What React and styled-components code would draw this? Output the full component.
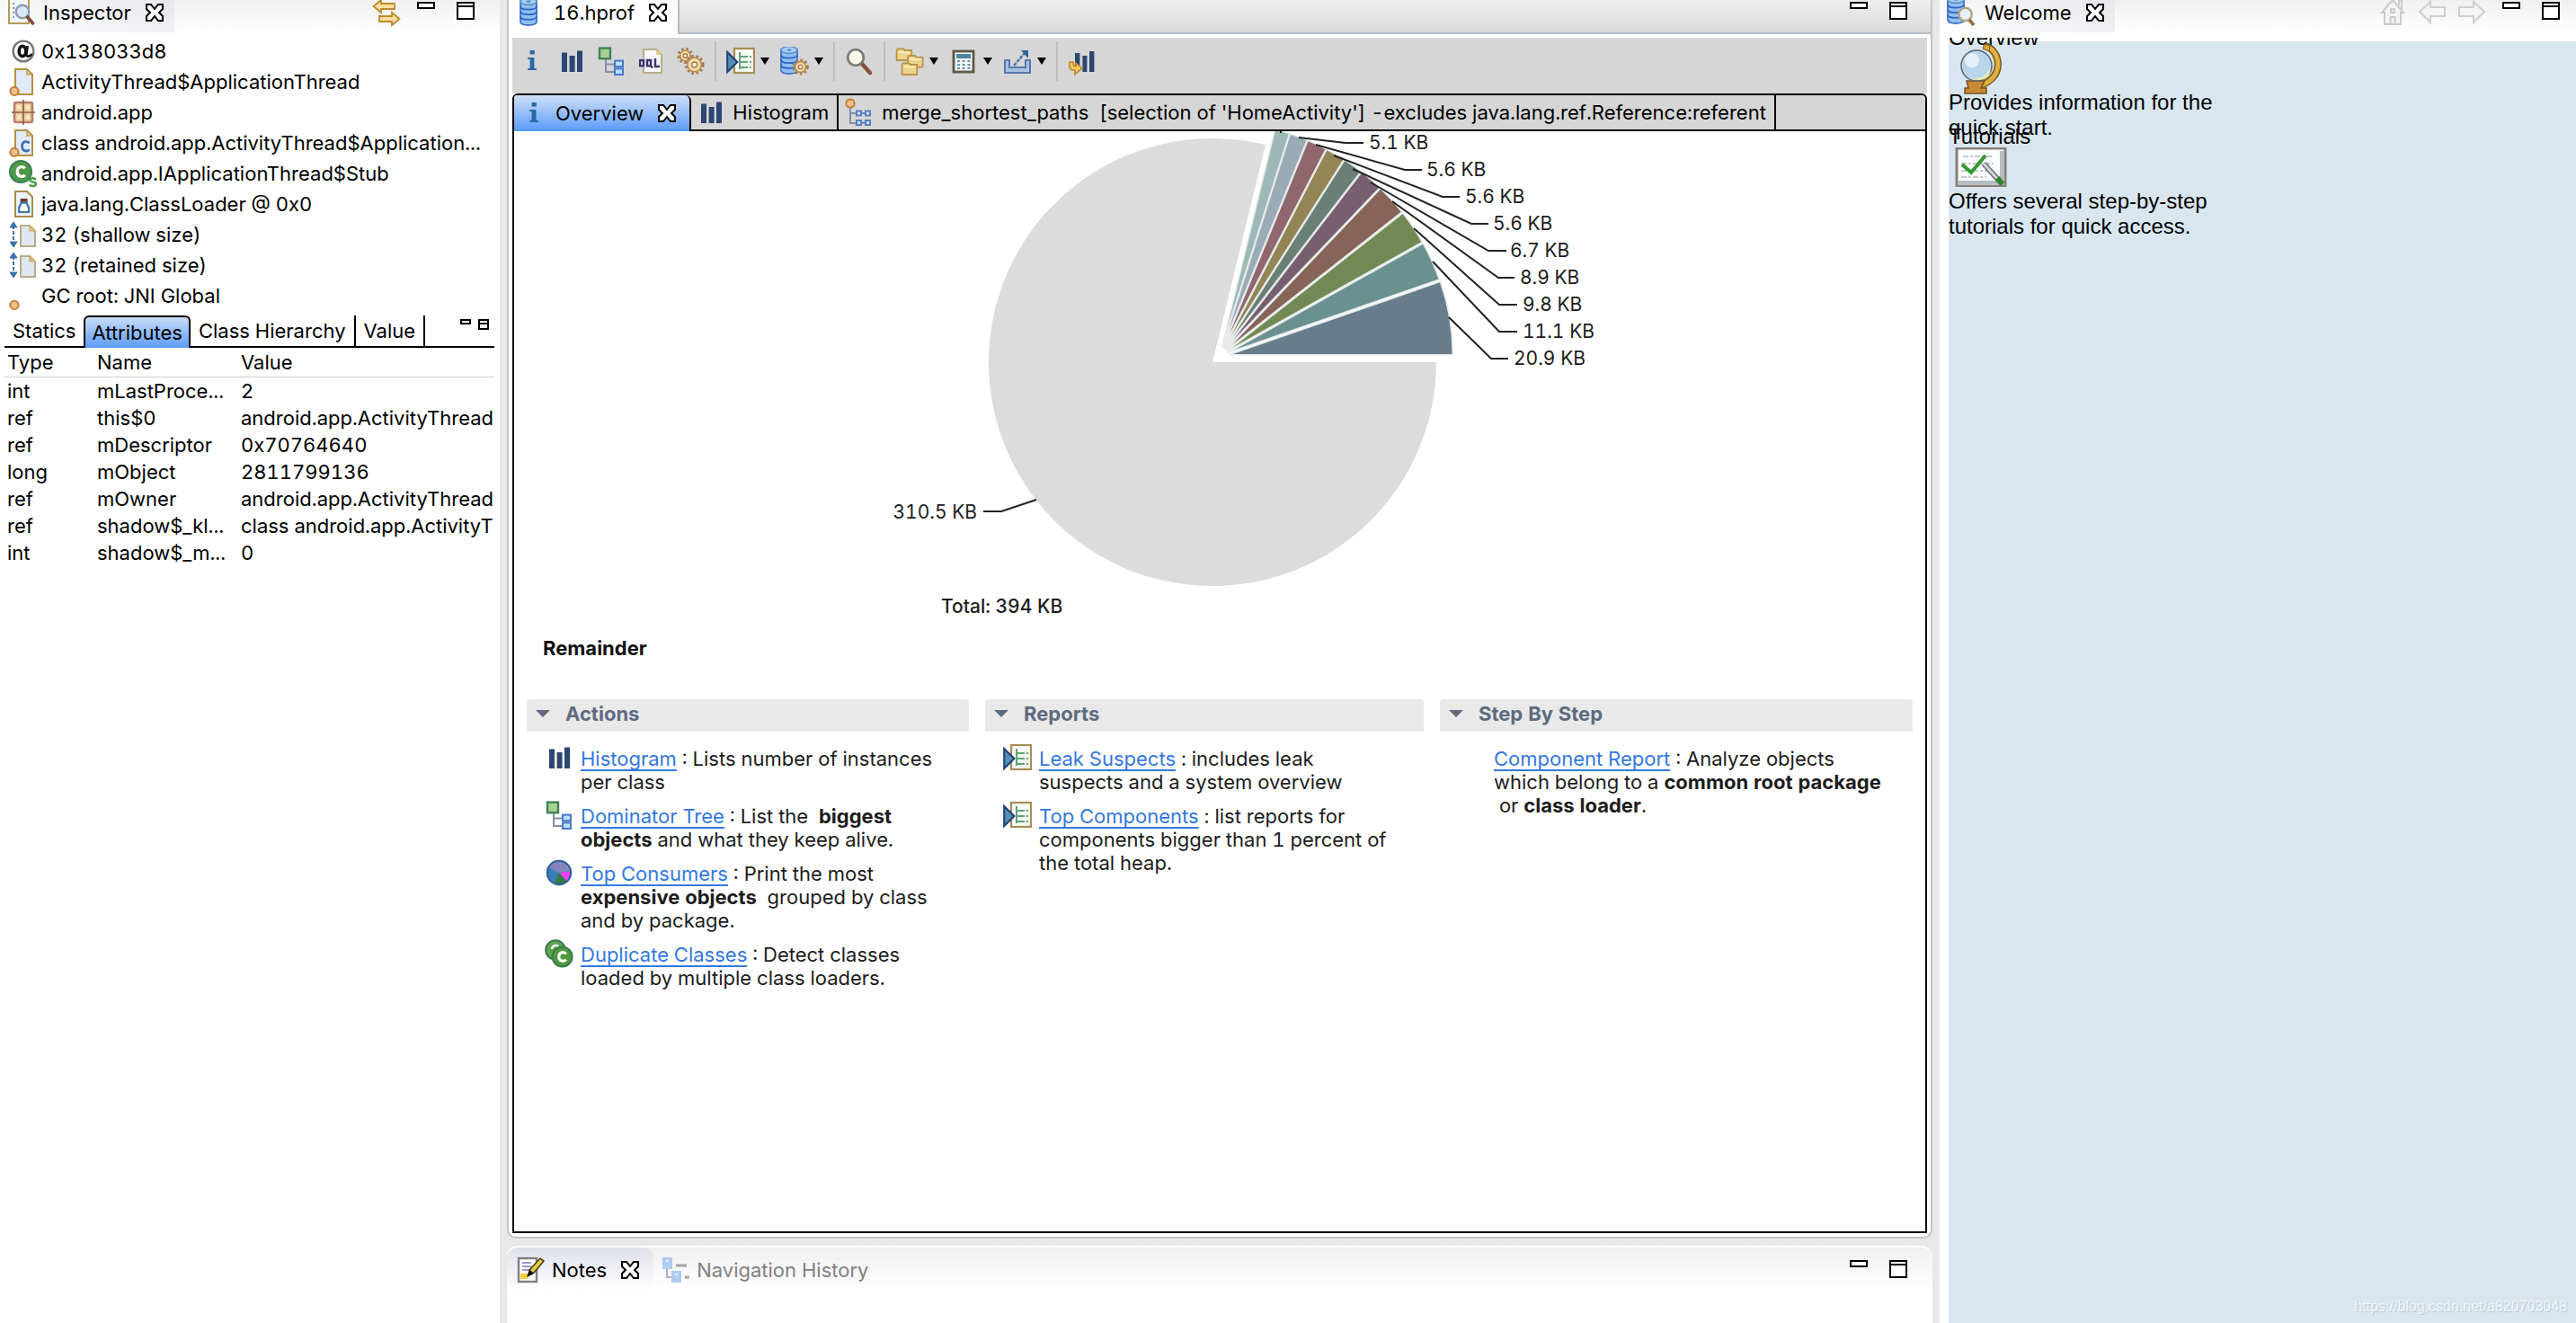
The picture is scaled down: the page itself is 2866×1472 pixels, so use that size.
import React from 'react';
import styled, { createGlobalStyle, css } from 'styled-components';

const GlobalStyle = createGlobalStyle`
  *, *::before, *::after { box-sizing: border-box; }
  html, body, #root { height: 100%; }
  body {
    margin: 0;
    overflow: hidden;
    background: #e8e8e8;
    color: #000;
    font-family: Inter, "Liberation Sans", sans-serif;
    font-size: 22px;
    font-variant-numeric: tabular-nums;
    line-height: 30px;
  }
  button { font: inherit; color: inherit; background: none; border: 0; padding: 0; margin: 0; cursor: pointer; }
  ul { list-style: none; margin: 0; padding: 0; }
  h2, h3, p { margin: 0; font-size: inherit; }
  svg { display: block; flex: none; }
`;

/* ---------- icons ---------- */

const Icon = ({ size = 32, box = 16, children }) => (
  <svg width={size} height={size} viewBox={`0 0 ${box} ${box}`} aria-hidden="true">{children}</svg>
);

const CloseGlyph = () => (
  <svg width="20" height="20" viewBox="0 0 20 20" aria-hidden="true">
    <path d="M1 1h5l4 5 4-5h5v5l-4 4 4 4v5h-5l-4-5-4 5H1v-5l4-4-4-4z" fill="#fff" stroke="#000" strokeWidth="2" />
  </svg>
);
const MinGlyph = () => (
  <svg width="20" height="20" viewBox="0 0 20 20" aria-hidden="true">
    <path d="M1 1h18v6H1z" fill="#fff" stroke="#000" strokeWidth="2" />
  </svg>
);
const MaxGlyph = () => (
  <svg width="20" height="20" viewBox="0 0 20 20" aria-hidden="true">
    <path d="M1 1h18v18H1zM1 5h18" fill="#fff" stroke="#000" strokeWidth="2" />
  </svg>
);
const SmallMin = () => (
  <svg width="12" height="12" viewBox="0 0 12 12" aria-hidden="true">
    <path d="M1 1h10v4H1z" fill="#fff" stroke="#000" strokeWidth="2" />
  </svg>
);
const SmallRestore = () => (
  <svg width="12" height="12" viewBox="0 0 12 12" aria-hidden="true">
    <path d="M1 1h10v10H1zM1 5h10" fill="#fff" stroke="#000" strokeWidth="2" />
  </svg>
);
const Arrow = () => (
  <svg width="10" height="8" viewBox="0 0 10 8" aria-hidden="true"><path d="M0 0h10L5 8z" /></svg>
);
const Twistie = () => (
  <svg width="16" height="8" viewBox="0 0 16 8" aria-hidden="true"><path d="M0 0h16L8 8z" fill="#5d6b80" /></svg>
);

const Page = ({ x = 3.5, tint = '#e3eaf7' }) => (
  <>
    <path d={`M${x} 1h6.500l3 3v11h-9.500z`} fill={tint} stroke="#b39144" strokeWidth="1" />
    <path d={`M${x + 6.5} 1v3h3z`} fill="#e5c987" stroke="#b39144" strokeWidth=".6" />
  </>
);
const RootDot = () => <circle cx="3" cy="13.200" r="2.300" fill="#f4bf85" stroke="#c47c39" strokeWidth="1" />;

const InspectorIcon = () => (
  <Icon>
    <path d="M1 .500h11v13.500H1z" fill="#f2f6fc" stroke="#b99a55" />
    <path d="M3 3h1M3 5.500h1M3 8h1M3 10.500h1" stroke="#7c93bf" />
    <circle cx="8.500" cy="7.500" r="3.600" fill="#dbe8f8" stroke="#8d9cb3" strokeWidth="1.200" />
    <path d="M11.300 10.500l3 3.500" stroke="#7d4b3a" strokeWidth="1.800" strokeLinecap="round" />
  </Icon>
);
const SyncIcon = () => (
  <Icon>
    <path d="M.800 4.500L5 1v2h7.500v3H5v2z" fill="#f7dfa0" stroke="#bd8a2c" strokeWidth=".900" />
    <path d="M15.200 11.500L11 8v2H4v3h7v2z" fill="#f7dfa0" stroke="#bd8a2c" strokeWidth=".900" />
  </Icon>
);
const AtIcon = () => (
  <Icon>
    <circle cx="8" cy="8" r="5.700" fill="#fff" stroke="#777" strokeWidth="1.200" />
    <ellipse cx="7.500" cy="8" rx="1.900" ry="2.800" fill="none" stroke="#111" strokeWidth="1.800" />
    <path d="M10.300 5l-.700 5c.3 1.300 2 1 3.200-.500" fill="none" stroke="#111" strokeWidth="1.400" />
  </Icon>
);
const ObjectIcon = () => <Icon><Page /><RootDot /></Icon>;
const PackageIcon = () => (
  <Icon>
    <rect x="3" y="2.500" width="10" height="11" rx="1" fill="#ecd0a0" stroke="#b5806a" strokeWidth="1.300" />
    <path d="M8 1v14M1.500 8h13" stroke="#8d5a48" strokeWidth=".8" />
    <path d="M4.500 5.300h2M9.500 5.300h2M4.500 10.800h2M9.500 10.800h2" stroke="#fbe8c4" strokeWidth="2" />
  </Icon>
);
const ClassIcon = () => (
  <Icon>
    <Page />
    <path d="M11.200 8.200c-.500-1.300-3.900-1.500-3.900 1.700s3.400 3 3.900 1.700" fill="none" stroke="#3f72b3" strokeWidth="1.400" />
    <RootDot />
  </Icon>
);
const SuperIcon = () => (
  <Icon>
    <circle cx="6.500" cy="7" r="6" fill="#4f9a48" stroke="#3a7f58" />
    <path d="M8.800 5.200c-.900-1.500-4.200-1.300-4.200 1.800s3.300 3.300 4.200 1.800" fill="none" stroke="#fff" strokeWidth="1.600" />
    <path d="M15 11.300c-1.500-1-3.500-.700-3.300.5s3.300.600 3.300 2-2.200 1.500-3.700.600" fill="none" stroke="#4b9b46" strokeWidth="1.300" />
  </Icon>
);
const LoaderIcon = () => (
  <Icon>
    <path d="M3.500 1h6.500l3 3v11h-9.500z" fill="#eef2fa" stroke="#a98c4c" />
    <path d="M6.300 5h4v2h-4z" fill="#7b3a23" />
    <path d="M6.800 7.300h3c0 1.200 1.200 1.500 1.200 3v2.200H5.600v-2.200c0-1.500 1.200-1.800 1.200-3z" fill="#fff" stroke="#3b74b5" strokeWidth="1.100" />
  </Icon>
);
const SizeIcon = () => (
  <Icon>
    <path d="M2.500 3v10" stroke="#3c71a9" strokeDasharray="2 1" />
    <path d="M.500 4L2.500 1l2 3zM.500 12l2 3 2-3z" fill="#3c71a9" stroke="#3c71a9" strokeWidth=".5" />
    <path d="M6.500 3h5l3 3v8.500h-8z" fill="#dfe7f3" stroke="#b9ad86" />
    <path d="M11.500 3v3h3z" fill="#e0c987" stroke="#c4ac62" strokeWidth=".6" />
  </Icon>
);
const GcIcon = () => <Icon><RootDot /></Icon>;

const DbStack = () => (
  <>
    <path d="M1.500 1.500v11.500c0 1.300 2 2 4.500 2s4.500-.700 4.500-2V1.500z" fill="#8fc0ee" stroke="#4274cc" strokeWidth=".900" />
    <path d="M1.500 4.500c0 2.400 9 2.400 9 0M1.500 7.300c0 2.400 9 2.400 9 0M1.500 10.100c0 2.400 9 2.400 9 0" fill="none" stroke="#2f62c8" strokeWidth=".9" />
    <ellipse cx="6" cy="1.800" rx="4.500" ry="1.900" fill="#a8d0f2" stroke="#5d93cf" strokeWidth=".8" />
    <ellipse cx="6" cy="1.800" rx="1.300" ry=".6" fill="#4c86c9" />
  </>
);
const DbIcon = () => <Icon><g transform="translate(1 0)"><DbStack /></g></Icon>;
const WelcomeIcon = () => (
  <Icon>
    <g transform="translate(-1 -1)"><DbStack /></g>
    <circle cx="10.300" cy="9" r="3.600" fill="#e8f1fb" stroke="#b3a27e" strokeWidth="1.200" />
    <path d="M12.500 12l2.500 3" stroke="#93703c" strokeWidth="1.800" />
  </Icon>
);
const InfoIcon = () => (
  <Icon>
    <path d="M6.800 2h2.600v2.200H6.800zM5.600 6h3.600v6h1.200v1H5.600v-1h1.200V7H5.600z" fill="#2768a8" />
  </Icon>
);
const BarsIcon = () => (
  <Icon>
    <path d="M2.500 3.300h3V14h-3zM6.800 5h3v9h-3zM11 2.300h3V14h-3z" fill="#2c4673" />
  </Icon>
);
const TreeIcon = () => (
  <Icon>
    <path d="M5 6v8h5M5 9.800h5" fill="none" stroke="#8390a5" />
    <rect x="1.500" y=".800" width="6" height="5.800" fill="#a8d092" stroke="#3f8358" strokeWidth="1.200" />
    <rect x="10" y="7.800" width="4.500" height="3.300" fill="#b8e2fb" stroke="#4778c8" />
    <rect x="10" y="12.200" width="4.500" height="3.300" fill="#b8e2fb" stroke="#4778c8" />
  </Icon>
);
const OqlIcon = () => (
  <Icon>
    <path d="M4 1.500h7l3 3V14.500H4z" fill="#f8f8fb" stroke="#b8ae85" />
    <path d="M11 1.500v3h3z" fill="#e5cc86" />
    <rect x="1" y="6.500" width="12.500" height="5" fill="#f2f2f8" />
    <path d="M2 7.500h2v3.200H2zM6 7.500h2v3.200H6zM8 10.500l1 1.200M10.500 6.500v4.500h2.500" fill="none" stroke="#3b3568" strokeWidth="1.200" />
  </Icon>
);
const Gear = ({ x, y, r, w = 1.4 }) => (
  <g transform={`translate(${x} ${y})`}>
    <circle r={r + 0.9} fill="none" stroke="#a37b55" strokeWidth={w} strokeDasharray="1.300 1.300" />
    <circle r={r} fill="#f5dca4" stroke="#b58a55" strokeWidth=".8" />
    <circle r={r / 2.6} fill="#fdf6e4" stroke="#a5794f" strokeWidth=".7" />
  </g>
);
const GearsIcon = () => <Icon><Gear x={5.200} y={5} r={2.900} /><Gear x={10.300} y={10} r={3.900} /></Icon>;
const ReportIcon = () => (
  <Icon>
    <rect x="4.500" y="1" width="11" height="13.500" fill="#f6f9f4" stroke="#a88d55" strokeWidth="1.100" />
    <path d="M7.500 3v9.500M7.500 5.500h4.500M7.500 8.500h4.500M7.500 11.500h4.500M13 5.500h1M13 8.500h1M13 11.500h1" stroke="#5fa573" />
    <path d="M.600 3v11l5.600-5.500z" fill="#5291b0" stroke="#1f3d7a" />
  </Icon>
);
const DbGearIcon = () => <Icon><g transform="translate(-1 0)"><DbStack /></g><Gear x={11.300} y={11.200} r={3} /></Icon>;
const SearchIcon = () => (
  <Icon>
    <path d="M9.500 9.500l4.500 5" stroke="#83503c" strokeWidth="2.200" strokeLinecap="round" />
    <circle cx="6" cy="6" r="4.400" fill="#f9f9ee" stroke="#7c7c74" strokeWidth="1.400" />
  </Icon>
);
const FoldersIcon = () => (
  <Icon>
    {[[.8, 1], [7, 4.8], [3.8, 9]].map(([x, y]) => (
      <g key={x} transform={`translate(${x} ${y})`}>
        <path d="M0 1V6.500H8.300V1H4.500L4 .200H.500z" fill="#efd48c" stroke="#b9944a" strokeWidth=".9" />
        <path d="M1 2.200h6.300" stroke="#fbeec4" />
      </g>
    ))}
  </Icon>
);
const CalcIcon = () => (
  <Icon>
    <rect x="2.500" y="2.500" width="11" height="11.500" fill="#f3f7f7" stroke="#5e5744" strokeWidth="1.400" />
    <path d="M4 4h8v2.500H4z" fill="#4d84a3" />
    <path d="M4.500 8h1.500M7.300 8h1.500M10.200 8h1.500M4.500 10h1.500M7.300 10h1.500M10.200 10h1.500M4.500 12h1.500M7.300 12h1.500M10.200 12h1.500" stroke="#5d93b3" />
  </Icon>
);
const ExportIcon = () => (
  <Icon>
    <path d="M1 7.500h2.500v4h9v-4H15v7H1z" fill="#a9c2e4" stroke="#5676ad" />
    <path d="M6 10.500L12.500 3" stroke="#4472a8" strokeWidth="1.200" strokeDasharray="2 .6" />
    <path d="M10 2h4v4.500z" fill="#2c6396" />
  </Icon>
);
const BarsArrowIcon = () => (
  <Icon>
    <path d="M4 3.500h2.700V12H4zM8.200 5h2.500v9H8.200zM12 2.500h2.700V14H12z" fill="#2c4673" />
    <path d="M1 8.500v2.500c0 2 1.500 2 3 2v2.300L8 12 4.500 9v1.800C3.500 11 3 10.500 3 8.500z" fill="#f6cb5c" stroke="#b9832a" strokeWidth=".8" />
  </Icon>
);
const MergeIcon = () => (
  <Icon>
    <path d="M3.500 5v9h5M3.500 8.500h5" fill="none" stroke="#8390a5" />
    <circle cx="3.500" cy="3" r="2.300" fill="#f4bf85" stroke="#c47c39" />
    <path d="M7 7.300h2.500v2.500H7zM12 7.300h2.500v2.500H12zM7 12.500h2.500V15H7zM12 12.500h2.500V15H12zM9.500 8.500H12M9.500 13.700H12" fill="#cfe0f6" stroke="#5b7fc0" />
  </Icon>
);
const PieIcon = () => (
  <Icon>
    <circle cx="8" cy="8" r="6.600" fill="#3a7fb5" />
    <path d="M8 8L2 5a6.600 6.600 0 0 1 12.500 2z" fill="#8585bd" />
    <path d="M8 8l6.600-.800A6.600 6.600 0 0 1 12.500 13z" fill="#ec3df0" />
    <path d="M8 8l4.500 5a6.600 6.600 0 0 1-7 1z" fill="#357a40" />
    <circle cx="8" cy="8" r="6.600" fill="none" stroke="#2a5aa0" />
  </Icon>
);
const DupIcon = () => (
  <Icon>
    <circle cx="6" cy="6" r="5.400" fill="#5fa551" stroke="#3a7a4c" />
    <path d="M7.500 4c-1-1-3.300-.600-3.500 1.500" fill="none" stroke="#fff" strokeWidth="1.200" />
    <circle cx="9.800" cy="9.700" r="5.500" fill="#4f9a3e" stroke="#3a7a4c" />
    <path d="M11.800 8.200c-.800-1.400-3.900-1.200-3.900 1.500s3.100 2.900 3.900 1.500" fill="none" stroke="#fff" strokeWidth="1.500" />
  </Icon>
);
const NotesIcon = () => (
  <Icon>
    <rect x="1.500" y="1.500" width="10" height="13" fill="#fff" stroke="#7e7e84" strokeWidth="1.200" />
    <path d="M3.500 4h5M3.500 6h5M3.500 8h4" stroke="#9a9ac4" />
    <path d="M2.500 10h4v3h-4z" fill="#f4cf3c" />
    <path d="M7 11l1-3.500L13.500 1.500 15.500 3 10 9.500z" fill="#e8cf3c" stroke="#454022" strokeWidth=".8" />
    <path d="M6 12l1.500-4.500L10 10z" fill="#111" />
  </Icon>
);
const NavHistIcon = () => (
  <Icon>
    <path d="M3.500 7v5h3" fill="none" stroke="#a9b0bd" />
    <rect x="1" y="1" width="5.500" height="6.500" fill="#aecbf0" />
    <rect x="6" y="8.500" width="5.500" height="6.500" fill="#aecbf0" />
    <path d="M3 3h1.500M8 10.500h1.500" stroke="#e4effb" />
    <path d="M8.500 5.500h6M13.500 12H16" stroke="#a3a3aa" strokeWidth="1.500" />
  </Icon>
);
const HomeIcon = () => (
  <Icon>
    <path d="M2 8l6-7 6 7h-1.500v6.500h-9V8z" fill="#f3f3f3" stroke="#cbcbcb" />
    <path d="M6.800 14.500v-4h2.500v4M7 6h2v2H7zM11.500 4V1H13v5" fill="none" stroke="#cbcbcb" />
  </Icon>
);
const BackIcon = () => (
  <Icon><path d="M1 7.500L7 2v3h8v5H7v3.500z" fill="#f5f5f5" stroke="#cfcfcf" /></Icon>
);
const ForwardIcon = () => (
  <Icon><path d="M15 7.500L9 2v3H1v5h8v3.500z" fill="#f5f5f5" stroke="#cfcfcf" /></Icon>
);
const GlobeArt = () => (
  <svg width="72" height="58" viewBox="0 0 72 58" aria-hidden="true">
    <path d="M41 3c18 6 21 36-6 44" fill="none" stroke="#75591d" strokeWidth="8" />
    <path d="M41 3c18 6 21 36-6 44" fill="none" stroke="#dfb23e" strokeWidth="5" />
    <path d="M38 6l2-5 6 2-1 6z" fill="#d9a838" stroke="#75591d" />
    <path d="M20 42h20l-4 8h6v6H18v-6h4z" fill="#c98b32" stroke="#75501f" strokeWidth="1.500" />
    <circle cx="31" cy="25" r="17" fill="#b9d5ec" stroke="#5b6670" strokeWidth="1.500" />
    <path d="M22 39c12 3 22-3 24-12 2 10-6 18-24 12z" fill="#e8eca8" />
    <circle cx="26" cy="19" r="8" fill="#eef6fd" opacity=".8" />
  </svg>
);
const TutorialArt = () => (
  <svg width="72" height="44" viewBox="0 0 72 44" aria-hidden="true">
    <rect x="9" y="1" width="54" height="42" fill="#fbfdff" stroke="#85817b" strokeWidth="3" />
    <path d="M11 39h50M59 4v36" stroke="#b5bcc4" strokeWidth="4" />
    <path d="M16 10h34M14 18h36M14 26h30M14 33h28" stroke="#c5c8cd" strokeWidth="2" strokeDasharray="6 2 3 2" />
    <path d="M39 18l18 20" stroke="#6d6f70" strokeWidth="6" />
    <path d="M39 18l18 20" stroke="#d3d5d6" strokeWidth="3" />
    <path d="M54 34l6 7" stroke="#2d8430" strokeWidth="6" />
    <path d="M15 19l10 9L41 9" fill="none" stroke="#329a2c" strokeWidth="4" />
  </svg>
);

/* ---------- shell ---------- */

const Workbench = styled.div`
  display: grid;
  grid-template-columns: minmax(0, 556fr) minmax(0, 1602fr) minmax(0, 708fr);
  height: 100%;
`;

const View = styled.section`
  display: flex;
  flex-direction: column;
  min-width: 0;
  min-height: 0;
  background: #fff;
  overflow: hidden;
`;

const CenterStack = styled.main`
  display: flex;
  flex-direction: column;
  gap: 8px;
  min-width: 0;
  min-height: 0;
  padding: 0 8px;
`;

const EditorView = styled(View)`
  flex: 1;
  border: solid #c4c4c2;
  border-width: 0 2px 2px;
  border-radius: 0 0 10px 10px;
`;

const NotesView = styled(View)`
  flex: none;
  height: 86px;
  border-top: 2px solid #fff;
  border-radius: 12px 12px 0 0;
`;

const TabBar = styled.header`
  display: flex;
  flex: none;
  align-items: stretch;
  justify-content: space-between;
  height: ${(p) => (p.$tall ? 48 : 36)}px;
  background: ${(p) => (p.$editor ? 'linear-gradient(#efefef, #d8d8d8)' : 'linear-gradient(#f0f0f0, #ffffff)')};
  ${(p) => p.$editor && css`height: 38px;`}
`;

const TabGroup = styled.div`
  display: flex;
  flex: ${(p) => (p.$fill ? '1' : 'none')};
  border-bottom: ${(p) => (p.$fill ? '2px solid #b2b9ca' : '0')};
  justify-content: flex-end;
`;

const ViewTab = styled.div`
  display: flex;
  align-items: center;
  gap: 8px;
  height: 100%;
  padding: ${(p) => p.$pad || '0 12px 8px 8px'};
  background: ${(p) => (p.$plain ? '#fff' : 'linear-gradient(90deg, rgba(255,255,255,.5), rgba(222,224,234,.5))')};
  ${(p) => p.$editor && css`border-right: 2px solid #b2b9ca;`}
  ${(p) => p.$shade && css`
    background: linear-gradient(#dfe1ea, #fff);
    border-radius: 12px 12px 0 0;
  `}
  ${(p) => p.$idle && css`background: none; color: #808080;`}
`;

const TabLabel = styled.button`
  display: flex;
  align-items: center;
  gap: ${(p) => p.$gap || 8}px;
  white-space: pre;
`;

const CloseButton = styled.button`
  margin-left: 8px;
`;

const ViewTools = styled.div`
  display: flex;
  align-items: flex-start;
  gap: 24px;
  padding: ${(p) => p.$top || 2}px ${(p) => p.$right}px 0 0;
`;

const IconButton = styled.button`
  display: block;
`;

const LiftedTools = styled.div`
  display: flex;
  height: 24px;
  align-items: center;
  gap: 12px;
  margin-right: -6px;
`;

/* ---------- inspector ---------- */

const FactList = styled.ul`
  padding: 4px 8px 5px;
`;
const Fact = styled.li`
  display: flex;
  align-items: center;
  gap: 4px;
  height: 34px;
  white-space: nowrap;
  svg { margin-left: 2px; }
`;
const FactText = styled.span`
  overflow: hidden;
  text-overflow: ellipsis;
`;

const SubTabs = styled.div`
  display: flex;
  align-items: stretch;
  height: 36px;
  margin: 0 6px 0 5px;
  border-bottom: 2px solid #000;
`;
const SubTab = styled.button`
  padding: 0 9px;
  white-space: nowrap;
  border-right: ${(p) => (p.$line ? '2px solid #000' : '0')};
  ${(p) => p.$active && css`
    margin-bottom: -2px;
    padding: 0 7px;
    border: solid #000;
    border-width: 2px 2px 0;
    border-radius: 6px 6px 0 0;
    background: linear-gradient(#c9dcf6, #5b9bf8);
  `}
`;
const SubTools = styled.div`
  display: flex;
  gap: 8px;
  margin-left: auto;
  padding: 4px 6px 0 0;
  align-items: flex-start;
`;

const AttrTable = styled.table`
  width: calc(100% - 10px);
  margin: 0 6px 0 4px;
  table-layout: fixed;
  border-collapse: collapse;
  th, td {
    height: 30px;
    padding: 0 8px 0 4px;
    text-align: left;
    font-weight: 400;
    white-space: nowrap;
    overflow: hidden;
    text-overflow: ellipsis;
  }
  th { height: 32px; border-bottom: 1px solid #cfcfcf; }
  th:last-child, td:last-child { padding-right: 0; text-overflow: clip; }
`;

/* ---------- editor ---------- */

const EditorBody = styled.div`
  display: flex;
  flex-direction: column;
  flex: 1;
  min-height: 0;
  padding: 4px;
`;

const Toolbar = styled.div`
  display: flex;
  align-items: center;
  height: 62px;
  padding-bottom: 10px;
  background: #d6d6d6;
`;
const Tool = styled.button`
  display: flex;
  align-items: center;
  justify-content: center;
  gap: 6px;
  height: 44px;
  width: ${(p) => (p.$menu ? 60 : 44)}px;
`;
const Divider = styled.span`
  width: 2px;
  height: 44px;
  margin: 0 5px;
  background: #bebebe;
`;

const PageBox = styled.div`
  display: flex;
  flex-direction: column;
  flex: 1;
  min-height: 0;
  border: 2px solid #000;
  border-top-left-radius: 6px;
  border-top-right-radius: 6px;
  background: #fff;
  overflow: hidden;
`;
const PageTabs = styled.div`
  display: flex;
  flex: none;
  height: 40px;
  border-bottom: 2px solid #000;
  background: #d6d6d6;
`;
const PageTab = styled.div`
  display: flex;
  align-items: center;
  gap: 8px;
  padding: 0 9px 0 6px;
  border-right: 2px solid #000;
  ${(p) => p.$active && css`
    margin-bottom: -2px;
    padding-right: 15px;
    border-top-right-radius: 6px;
    background: linear-gradient(#cfdff6, #5b9bf8);
  `}
`;

const Overview = styled.div`
  flex: 1;
  min-height: 0;
  overflow: hidden;
  color: #1c1c1c;
  line-height: 26px;
`;
const ChartSvg = styled.svg`
  width: 860px;
  height: 556px;
  margin: 0 auto;
  font-family: Inter, "Liberation Sans", sans-serif;
  font-size: 21px;
`;
const Remainder = styled.h2`
  padding: 6px 32px 44px;
  font-weight: 700;
  color: #111;
`;
const Sections = styled.div`
  display: grid;
  grid-template-columns: 492fr 488fr 526fr;
  gap: 18px;
  padding: 0 14px;
`;
const Section = styled.section`
  min-width: 0;
`;
const SectionTitle = styled.h3`
  height: 36px;
  background: #e9e9e9;
  border-radius: 4px 4px 0 0;
  color: #5d6b80;
  font-weight: 700;
`;
const SectionToggle = styled.button`
  display: flex;
  align-items: center;
  gap: 17px;
  width: 100%;
  height: 32px;
  padding-left: 10px;
`;
const Entries = styled.ul`
  display: flex;
  flex-direction: column;
  gap: 12px;
  padding: 17px 0 0 20px;
`;
const Entry = styled.li`
  display: flex;
  gap: 8px;
  white-space: pre-wrap;
`;
const EntryIcon = styled.span`
  width: 32px;
  height: 24px;
  display: flex;
  align-items: center;
`;
const Link = styled.a`
  color: #3478e0;
  text-decoration: underline 2px;
  text-underline-offset: 4px;
  text-decoration-skip-ink: none;
`;
const EntryText = styled.p`
  min-width: 0;
`;

/* ---------- welcome ---------- */

const WelcomeBody = styled.div`
  display: flex;
  flex-direction: column;
  flex: 1;
  min-height: 0;
  margin: 6px 0 0 10px;
  overflow: hidden;
  background: linear-gradient(#fff 4px, #d9e6f0 4px);
  font-family: "Liberation Sans", Arial, sans-serif;
  font-size: 24px;
  line-height: 28px;
`;
const Topic = styled.article`
  width: 300px;
  h3 { font-weight: 400; margin-top: ${(p) => p.$pull}px; }
  svg { margin: ${(p) => p.$art}; }
`;
const Watermark = styled.p`
  margin: auto 10px 8px auto;
  font-size: 16px;
  line-height: 20px;
  color: rgba(255, 255, 255, .75);
  text-shadow: 1px 1px 1px rgba(120, 135, 150, .35);
`;

/* ---------- data ---------- */

const facts = [
  [AtIcon, '0x138033d8'],
  [ObjectIcon, 'ActivityThread$ApplicationThread'],
  [PackageIcon, 'android.app'],
  [ClassIcon, 'class android.app.ActivityThread$Application...'],
  [SuperIcon, 'android.app.IApplicationThread$Stub'],
  [LoaderIcon, 'java.lang.ClassLoader @ 0x0'],
  [SizeIcon, '32 (shallow size)'],
  [SizeIcon, '32 (retained size)'],
  [GcIcon, 'GC root: JNI Global'],
];

const attributes = [
  ['int', 'mLastProce...', '2'],
  ['ref', 'this$0', 'android.app.ActivityThread'],
  ['ref', 'mDescriptor', '0x70764640'],
  ['long', 'mObject', '2811799136'],
  ['ref', 'mOwner', 'android.app.ActivityThread'],
  ['ref', 'shadow$_kl...', 'class android.app.ActivityT'],
  ['int', 'shadow$_m...', '0'],
];

const TOTAL = 394;
const RADIUS = 249;
const slices = [
  [20.9, '#687d8c'], [11.1, '#6b9090'], [9.8, '#738955'], [8.9, '#866558'], [6.7, '#775f70'],
  [5.6, '#6a7f76'], [5.6, '#938554'], [5.6, '#90676e'], [5.1, '#9aabb5'], [4.2, '#9eb8b8'],
];

const polar = (cx, cy, r, deg) => {
  const a = (deg * Math.PI) / 180;
  return [cx + r * Math.cos(a), cy - r * Math.sin(a)];
};
const wedge = (cx, cy, r, from, to) => {
  const [x1, y1] = polar(cx, cy, r, from);
  const [x2, y2] = polar(cx, cy, r, to);
  return `M${cx} ${cy}L${x1} ${y1}A${r} ${r} 0 ${to - from > 180 ? 1 : 0} 0 ${x2} ${y2}Z`;
};

/* Leader lines: rim point, elbow, end of the flat run, text start. */
const callouts = [
  ['5.1 KB', 96, -250, 148, -244, 168, 174],
  ['5.6 KB', 115, -242, 214, -214, 233, 238],
  ['5.6 KB', 135, -230, 256, -184, 275, 281],
  ['5.6 KB', 156, -215, 288, -154, 307, 312],
  ['6.7 KB', 176, -200, 307, -124, 327, 331],
  ['8.9 KB', 200, -179, 318, -94, 336, 342],
  ['9.8 KB', 224, -149, 319, -64, 339, 345],
  ['11.1 KB', 245, -112, 319, -34, 339, 345],
  ['20.9 KB', 263, -50, 310, -4, 329, 335],
];

const Chart = () => {
  let start = 0;
  const parts = slices.map(([value, color]) => {
    const sweep = (value / TOTAL) * 360;
    const lift = polar(0, 0, 20, 24 + (start + sweep / 2 - 9.5) * 0.527);
    const part = { color, d: wedge(lift[0], lift[1], RADIUS, start, start + sweep) };
    start += sweep;
    return part;
  });
  return (
    <ChartSvg viewBox="-422 -257 860 556" role="img" aria-label="Biggest objects by retained size">
      <path d={wedge(0, 0, RADIUS, start, 360)} fill="#dcdcdc" />
      {parts.map((p) => <path key={p.color} d={p.d} fill={p.color} stroke="#e6ebeb" strokeWidth="1.500" />)}
      <g fill="none" stroke="#222" strokeWidth="2">
        <path d="M76 -257v2" />
        {callouts.map(([t, x1, y1, x2, y2, x3]) => <path key={y2} d={`M${x1} ${y1}L${x2} ${y2}H${x3}`} />)}
        <path d="M-196 153L-235 166H-255" />
      </g>
      <g fill="#1c1c1c">
        {callouts.map(([t, , , , y2, , x4]) => <text key={y2} x={x4} y={y2 + 7}>{t}</text>)}
        <text x="-262" y="174" textAnchor="end">310.5 KB</text>
        <text x="-302" y="279" fontWeight="500">Total: 394 KB</text>
      </g>
    </ChartSvg>
  );
};

const sections = [
  {
    title: 'Actions',
    entries: [
      [BarsIcon, 'Histogram', <> : Lists number of instances<br />per class</>],
      [TreeIcon, 'Dominator Tree', <> : List the  <b>biggest</b><br /><b>objects</b> and what they keep alive.</>],
      [PieIcon, 'Top Consumers', <> : Print the most<br /><b>expensive objects</b>  grouped by class<br />and by package.</>],
      [DupIcon, 'Duplicate Classes', <> : Detect classes<br />loaded by multiple class loaders.</>],
    ],
  },
  {
    title: 'Reports',
    entries: [
      [ReportIcon, 'Leak Suspects', <> : includes leak<br />suspects and a system overview</>],
      [ReportIcon, 'Top Components', <> : list reports for<br />components bigger than 1 percent of<br />the total heap.</>],
    ],
  },
  {
    title: 'Step By Step',
    entries: [
      [null, 'Component Report', <> : Analyze objects<br />which belong to a <b>common root package</b><br /> or <b>class loader</b>.</>],
    ],
  },
];

const tools = [
  [InfoIcon, 'Overview'], [BarsIcon, 'Histogram'], [TreeIcon, 'Dominator tree'], [OqlIcon, 'OQL'], [GearsIcon, 'Thread overview'], null,
  [ReportIcon, 'Run report', true], [DbGearIcon, 'Query browser', true], null,
  [SearchIcon, 'Find object'], null,
  [FoldersIcon, 'Group result', true], [CalcIcon, 'Calculate retained size', true], [ExportIcon, 'Export', true], null,
  [BarsArrowIcon, 'Compare'],
];

const WindowButtons = () => (
  <>
    <IconButton aria-label="Minimize"><MinGlyph /></IconButton>
    <IconButton aria-label="Maximize"><MaxGlyph /></IconButton>
  </>
);

const Inspector = () => (
  <View>
    <TabBar>
      <ViewTab>
        <TabLabel><InspectorIcon />Inspector</TabLabel>
        <CloseButton aria-label="Close Inspector"><CloseGlyph /></CloseButton>
      </ViewTab>
      <ViewTools $right={28}>
        <LiftedTools>
          <IconButton aria-label="Link with snapshot"><SyncIcon /></IconButton>
        </LiftedTools>
        <WindowButtons />
      </ViewTools>
    </TabBar>
    <FactList>
      {facts.map(([Glyph, text]) => <Fact key={text}><Glyph /><FactText>{text}</FactText></Fact>)}
    </FactList>
    <SubTabs>
      <SubTab>Statics</SubTab>
      <SubTab $active>Attributes</SubTab>
      <SubTab $line>Class Hierarchy</SubTab>
      <SubTab $line>Value</SubTab>
      <SubTools>
        <IconButton aria-label="Minimize attributes"><SmallMin /></IconButton>
        <IconButton aria-label="Restore attributes"><SmallRestore /></IconButton>
      </SubTools>
    </SubTabs>
    <AttrTable>
      <colgroup><col width="100" /><col width="160" /><col /></colgroup>
      <thead><tr><th>Type</th><th>Name</th><th>Value</th></tr></thead>
      <tbody>
        {attributes.map(([type, name, value]) => (
          <tr key={name}><td>{type}</td><td>{name}</td><td>{value}</td></tr>
        ))}
      </tbody>
    </AttrTable>
  </View>
);

const Editor = () => (
  <EditorView>
    <TabBar $editor>
      <ViewTab $plain $editor $pad="0 12px 10px 8px">
        <TabLabel $gap={10}><DbIcon />16.hprof</TabLabel>
        <CloseButton aria-label="Close 16.hprof"><CloseGlyph /></CloseButton>
      </ViewTab>
      <TabGroup $fill>
        <ViewTools $right={26}><WindowButtons /></ViewTools>
      </TabGroup>
    </TabBar>
    <EditorBody>
      <Toolbar>
        {tools.map((tool, i) => {
          if (!tool) return <Divider key={i} />;
          const [Glyph, label, menu] = tool;
          return <Tool key={i} aria-label={label} $menu={menu}><Glyph />{menu && <Arrow />}</Tool>;
        })}
      </Toolbar>
      <PageBox>
        <PageTabs>
          <PageTab $active>
            <TabLabel><InfoIcon />Overview</TabLabel>
            <CloseButton aria-label="Close Overview"><CloseGlyph /></CloseButton>
          </PageTab>
          <PageTab><TabLabel><BarsIcon />Histogram</TabLabel></PageTab>
          <PageTab>
            <TabLabel $gap={10}><MergeIcon />{"merge_shortest_paths  [selection of 'HomeActivity'] -excludes java.lang.ref.Reference:referent"}</TabLabel>
          </PageTab>
        </PageTabs>
        <Overview>
          <Chart />
          <Remainder>Remainder</Remainder>
          <Sections>
            {sections.map(({ title, entries }) => (
              <Section key={title}>
                <SectionTitle><SectionToggle aria-expanded="true"><Twistie />{title}</SectionToggle></SectionTitle>
                <Entries>
                  {entries.map(([Glyph, name, rest]) => (
                    <Entry key={name}>
                      <EntryIcon>{Glyph && <Glyph />}</EntryIcon>
                      <EntryText><Link href="#">{name}</Link>{rest}</EntryText>
                    </Entry>
                  ))}
                </Entries>
              </Section>
            ))}
          </Sections>
        </Overview>
      </PageBox>
    </EditorBody>
  </EditorView>
);

const Notes = () => (
  <NotesView>
    <TabBar $tall>
      <TabGroup>
        <ViewTab $shade $pad="2px 16px 0 10px">
          <TabLabel><NotesIcon />Notes</TabLabel>
          <CloseButton aria-label="Close Notes"><CloseGlyph /></CloseButton>
        </ViewTab>
        <ViewTab $idle $pad="2px 12px 0 8px">
          <TabLabel><NavHistIcon />Navigation History</TabLabel>
        </ViewTab>
      </TabGroup>
      <ViewTools $top={14} $right={28}><WindowButtons /></ViewTools>
    </TabBar>
  </NotesView>
);

const Welcome = () => (
  <View>
    <TabBar>
      <ViewTab>
        <TabLabel $gap={10}><WelcomeIcon />Welcome</TabLabel>
        <CloseButton aria-label="Close Welcome"><CloseGlyph /></CloseButton>
      </ViewTab>
      <ViewTools $right={18}>
        <LiftedTools>
          <IconButton aria-label="Home"><HomeIcon /></IconButton>
          <IconButton aria-label="Back"><BackIcon /></IconButton>
          <IconButton aria-label="Forward"><ForwardIcon /></IconButton>
        </LiftedTools>
        <WindowButtons />
      </ViewTools>
    </TabBar>
    <WelcomeBody>
      <Topic $pull={-14} $art="-8px 0 -6px">
        <h3>Overview</h3>
        <GlobeArt />
        <p>Provides information for the quick start.</p>
      </Topic>
      <Topic $pull={-18} $art="-2px 0 2px">
        <h3>Tutorials</h3>
        <TutorialArt />
        <p>Offers several step-by-step tutorials for quick access.</p>
      </Topic>
      <Watermark>https://blog.csdn.net/a820703048</Watermark>
    </WelcomeBody>
  </View>
);

export default function App() {
  return (
    <>
      <GlobalStyle />
      <Workbench>
        <Inspector />
        <CenterStack>
          <Editor />
          <Notes />
        </CenterStack>
        <Welcome />
      </Workbench>
    </>
  );
}
